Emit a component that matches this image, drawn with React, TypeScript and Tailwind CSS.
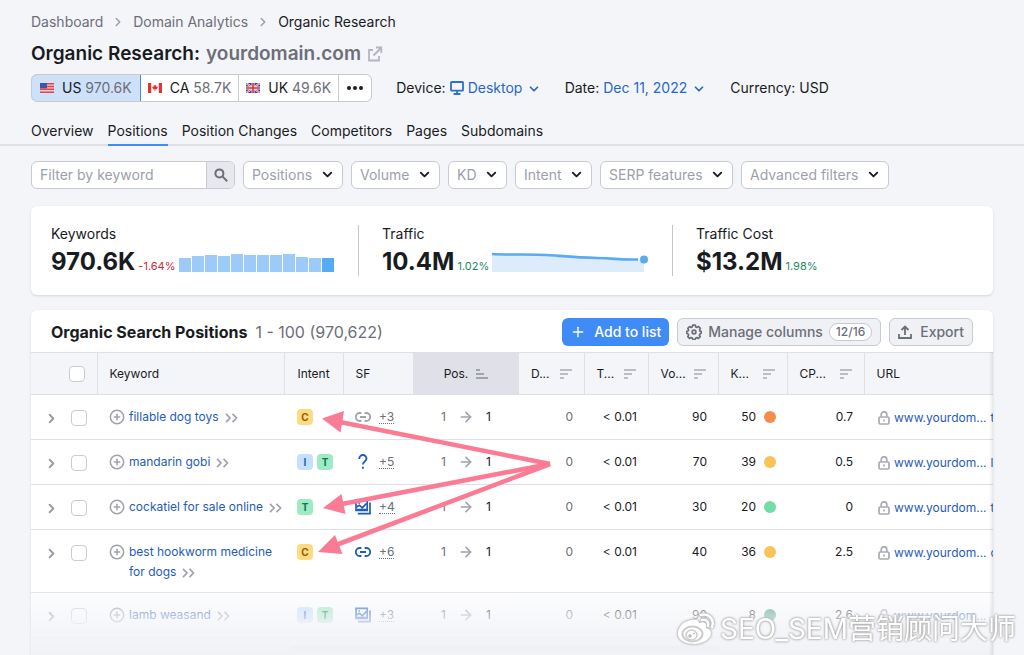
import React from 'react';
import { ChevronDown, ChevronRight, ArrowRight, CirclePlus, Plus } from 'lucide-react';

interface KeywordRow {
  keyword: string;
  intents: ('C' | 'I' | 'T')[];
  feature: 'link' | 'question' | 'image';
  muted?: boolean;
  more: string;
  traffic: string;
  volume: string;
  kd: string;
  kdColor: string;
  cpc: string;
  rest: string;
}

const rows: KeywordRow[] = [
  { keyword: 'fillable dog toys', intents: ['C'], feature: 'link', muted: true, more: '+3', traffic: '< 0.01', volume: '90', kd: '50', kdColor: 'bg-[#f68c4c]', cpc: '0.7', rest: 't' },
  { keyword: 'mandarin gobi', intents: ['I', 'T'], feature: 'question', more: '+5', traffic: '< 0.01', volume: '70', kd: '39', kdColor: 'bg-[#f9c357]', cpc: '0.5', rest: 'l' },
  { keyword: 'cockatiel for sale online', intents: ['T'], feature: 'image', more: '+4', traffic: '< 0.01', volume: '30', kd: '20', kdColor: 'bg-[#74dca6]', cpc: '0', rest: 't' },
  { keyword: 'best hookworm medicine for dogs', intents: ['C'], feature: 'link', more: '+6', traffic: '< 0.01', volume: '40', kd: '36', kdColor: 'bg-[#f9c357]', cpc: '2.5', rest: 'c' },
  { keyword: 'lamb weasand', intents: ['I', 'T'], feature: 'image', more: '+3', traffic: '< 0.01', volume: '90', kd: '8', kdColor: 'bg-[#3f9c7a]', cpc: '2.6', rest: '' },
];

const intentStyles = {
  C: 'bg-[#fbdc80] text-[#a0560c]',
  I: 'bg-[#c4e0fd] text-[#1f62b5]',
  T: 'bg-[#9eeac4] text-[#0d7550]',
};

const bars = [14, 16, 17, 16, 18, 17, 17, 17, 18, 15, 14, 14];

const sortable = [
  { label: 'D...', name: 'Difference' },
  { label: 'T...', name: 'Traffic' },
  { label: 'Vo...', name: 'Volume' },
  { label: 'K...', name: 'KD' },
  { label: 'CP...', name: 'CPC' },
];

const UsFlag = () => (
  <svg width="14" height="10" viewBox="0 0 14 10" aria-hidden="true">
    <rect width="14" height="10" fill="#f6c9cb" />
    <path d="M0 .7h14M0 3.5h14M0 6.3h14M0 9.2h14" stroke="#e0474c" strokeWidth="1.6" />
    <rect width="7" height="5.4" fill="#4254a5" />
  </svg>
);

const CaFlag = () => (
  <svg width="14" height="10" viewBox="0 0 14 10" aria-hidden="true">
    <rect width="14" height="10" fill="#fff" />
    <path d="M0 0h3.2v10H0zM10.8 0H14v10h-3.2z" fill="#e3342f" />
    <path d="M7 1.4l.8 1.4.9-.3-.2 1.6 1.4-.3-.4 1.3-1.3 1.3H7.3v1.8h-.6V6.4H5.8L4.5 5.1l-.4-1.3 1.4.3-.2-1.6.9.3z" fill="#e3342f" />
  </svg>
);

const UkFlag = () => (
  <svg width="14" height="10" viewBox="0 0 14 10" aria-hidden="true">
    <rect width="14" height="10" fill="#3b3f97" />
    <path d="M0 0l14 10M14 0L0 10" stroke="#e9e4f0" strokeWidth="2" />
    <path d="M0 0l14 10M14 0L0 10" stroke="#d8414a" strokeWidth=".7" />
    <path d="M7 0v10M0 5h14" stroke="#f3eef4" strokeWidth="3" />
    <path d="M7 0v10M0 5h14" stroke="#d8323b" strokeWidth="1.6" />
  </svg>
);

const SortIcon = ({ asc = false }: { asc?: boolean }) => (
  <svg width="12" height="10" viewBox="0 0 12 10" fill="none" stroke={asc ? '#8b8e9a' : '#a9abb6'} strokeWidth="1.6" aria-hidden="true">
    <path d={asc ? 'M0 1h4M0 5h8M0 9h12' : 'M0 1h12M0 5h8M0 9h4'} />
  </svg>
);

const DoubleChevron = () => (
  <svg width="13" height="10" viewBox="0 0 13 10" fill="none" stroke="#a0a2ac" strokeWidth="1.7" className="ml-1.5 inline" aria-hidden="true">
    <path d="M1 .8L5 5L1 9.200M7.500 .8L11.500 5L7.500 9.200" />
  </svg>
);

const LinkIcon = () => (
  <svg width="16" height="16" viewBox="0 0 16 16" fill="none" stroke="currentColor" strokeWidth="1.8" aria-hidden="true">
    <path d="M6.4 4H4.8a4 4 0 0 0 0 8h1.600M9.600 4h1.600a4 4 0 0 1 0 8H9.600M5 8h6" />
  </svg>
);

const QuestionIcon = () => (
  <svg width="16" height="16" viewBox="0 0 16 16" fill="none" stroke="currentColor" strokeWidth="1.9" aria-hidden="true">
    <path d="M4.3 5V4.6a3.6 3.6 0 0 1 7.2 0c0 2.6-3.6 3-3.6 6" />
    <path d="M7.9 12.7v2.1" />
  </svg>
);

const ImageIcon = () => (
  <svg width="16" height="16" viewBox="0 0 16 16" fill="none" stroke="currentColor" strokeWidth="1.7" aria-hidden="true">
    <path d="M1 1.400h11.200v10H1z" />
    <path d="M1.4 8L4.500 6.200L7.200 8.800L11.600 4.400M3.400 4h1.600M2 10.600h9.600" />
    <path d="M2.800 14.600H15V3.400" />
  </svg>
);

const LockIcon = () => (
  <svg width="12" height="14" viewBox="0 0 12 14" fill="none" stroke="#a9abb6" strokeWidth="1.7" className="shrink-0" aria-hidden="true">
    <rect x="1" y="6" width="10" height="7" rx="1.2" />
    <path d="M3.2 6V3.6a2.8 2.8 0 0 1 5.6 0V6M6 8.6v1.8" />
  </svg>
);

const GearIcon = () => (
  <svg width="16" height="16" viewBox="0 0 16 16" fill="none" stroke="currentColor" strokeWidth="1.7" strokeLinejoin="round" aria-hidden="true">
    <path d="M6.7 1.2h2.6l.5 1.7 1.2.5 1.6-.9 1.8 1.9-.9 1.5.5 1.2 1.2.3v1.9l-1.3.6-.5 1.2.8 1.5-1.8 1.8-1.5-.8-1.2.5-.6 1.4H6.9l-.6-1.4-1.2-.5-1.6.8-1.7-1.8.8-1.5-.5-1.2-1.3-.6V7.4l1.3-.4.5-1.2-.8-1.5 1.8-1.8 1.5.9 1.2-.5z" />
    <circle cx="8" cy="8" r="1.9" />
  </svg>
);

const FeatureIcon = ({ type }: { type: KeywordRow['feature'] }) => {
  if (type === 'link') return <LinkIcon />;
  if (type === 'question') return <QuestionIcon />;
  return <ImageIcon />;
};

const CheckBox = ({ label }: { label: string }) => (
  <input
    type="checkbox"
    aria-label={label}
    className="block h-4 w-4 appearance-none rounded border border-[#c9ccd4] bg-white checked:bg-[#408cf6]"
  />
);

const FilterSelect = ({ label }: { label: string }) => (
  <div className="relative">
    <select aria-label={label} className="h-7 appearance-none rounded-md border border-[#c8cad2] bg-white pr-[29px] pl-2 text-[#9c9fa9]">
      <option>{label}</option>
    </select>
    <ChevronDown size={15} strokeWidth={3} className="pointer-events-none absolute top-1.5 right-2 text-[#191b23]" />
  </div>
);

const Header: React.FC = () => (
  <header className="border-b-2 border-[#dfe0e5] px-[31px] pt-3">
    <nav aria-label="Breadcrumb" className="flex h-5 items-center gap-2 text-[#6c6e79]">
      <a href="#dashboard">Dashboard</a>
      <ChevronRight size={14} strokeWidth={2.5} className="text-[#9a9ca6]" />
      <a href="#analytics">Domain Analytics</a>
      <ChevronRight size={14} strokeWidth={2.5} className="text-[#9a9ca6]" />
      <a href="#research" className="text-[#191b23]">Organic Research</a>
    </nav>

    <h1 className="mt-2 flex h-7 items-center gap-1.5 text-[19px] font-semibold">
      <span>Organic Research:</span>
      <a href="#domain" className="flex items-center gap-1.5 text-[#6c6e79]">
        yourdomain.com
        <svg width="16" height="16" viewBox="0 0 16 16" fill="none" stroke="#b4b6bf" strokeWidth="1.8" aria-hidden="true">
          <path d="M6 4H2v10.5h10V10M9 1.5h5.3V7M14 2L6.5 9.5" />
        </svg>
      </a>
    </h1>

    <div className="mt-1.5 flex h-7 items-center gap-6">
      <div className="flex h-7 overflow-hidden rounded-md border border-[#c8cad2] bg-white">
        <button className="-my-px -ml-px flex items-center gap-2 rounded-l-md border border-[#4a8fec] bg-[#cde1fb] px-2">
          <UsFlag />
          <span>US <span className="text-[#6c6e79]">970.6K</span></span>
        </button>
        <button className="flex items-center gap-2 border-r border-[#c8cad2] px-[7px]">
          <CaFlag />
          <span>CA <span className="text-[#6c6e79]">58.7K</span></span>
        </button>
        <button className="flex items-center gap-2 border-r border-[#c8cad2] px-[7px]">
          <UkFlag />
          <span>UK <span className="text-[#6c6e79]">49.6K</span></span>
        </button>
        <button aria-label="More countries" className="px-2">
          <svg width="16" height="4" viewBox="0 0 16 4" fill="#191b23" aria-hidden="true">
            <circle cx="2" cy="2" r="2" />
            <circle cx="8" cy="2" r="2" />
            <circle cx="14" cy="2" r="2" />
          </svg>
        </button>
      </div>

      <div className="flex items-center">
        <label htmlFor="device">Device:</label>
        <svg width="14" height="14" viewBox="0 0 14 14" fill="none" stroke="#2f6fd0" strokeWidth="1.8" className="mr-1 ml-1" aria-hidden="true">
          <rect x="1" y="1" width="12" height="8.6" rx=".6" />
          <path d="M7 9.6v3M3.6 13h6.8" />
        </svg>
        <div className="relative">
          <select id="device" className="appearance-none bg-transparent pr-[18px] text-[#2a67c8]">
            <option>Desktop</option>
          </select>
          <ChevronDown size={14} strokeWidth={3} className="pointer-events-none absolute top-1 right-0 text-[#2a67c8]" />
        </div>
      </div>

      <div className="flex items-center gap-1">
        <label htmlFor="date">Date:</label>
        <div className="relative">
          <select id="date" className="appearance-none bg-transparent pr-[18px] text-[#2a67c8]">
            <option>Dec 11, 2022</option>
          </select>
          <ChevronDown size={14} strokeWidth={3} className="pointer-events-none absolute top-1 right-0 text-[#2a67c8]" />
        </div>
      </div>

      <div>Currency: USD</div>
    </div>

    <nav aria-label="Reports" className="-mb-0.5 flex gap-3.5 pt-[19px]">
      <a href="#overview" className="h-[25px]">Overview</a>
      <a href="#positions" className="h-[25px] border-b-2 border-[#408cf6]">Positions</a>
      <a href="#changes" className="h-[25px]">Position Changes</a>
      <a href="#competitors" className="h-[25px]">Competitors</a>
      <a href="#pages" className="h-[25px]">Pages</a>
      <a href="#subdomains" className="h-[25px]">Subdomains</a>
    </nav>
  </header>
);

const Filters: React.FC = () => (
  <div className="mt-[15px] flex gap-2">
    <form className="flex h-7 overflow-hidden rounded-md border border-[#c8cad2] bg-white">
      <input aria-label="Filter by keyword" placeholder="Filter by keyword" className="w-[174px] px-2 outline-none placeholder:text-[#9c9fa9]" />
      <button type="button" aria-label="Search" className="flex w-7 items-center justify-center border-l border-[#c8cad2] bg-[#e7e8ed]">
        <svg width="14" height="14" viewBox="0 0 14 14" fill="none" stroke="#6c6e79" strokeWidth="2" aria-hidden="true">
          <circle cx="5.4" cy="5.4" r="4" />
          <path d="M8.4 8.4l4.8 4.8" />
        </svg>
      </button>
    </form>
    <FilterSelect label="Positions" />
    <FilterSelect label="Volume" />
    <FilterSelect label="KD" />
    <FilterSelect label="Intent" />
    <FilterSelect label="SERP features" />
    <FilterSelect label="Advanced filters" />
  </div>
);

const Summary: React.FC = () => (
  <section className="mt-[17px] grid grid-cols-[327fr_314fr_321fr] rounded-md bg-white py-[19px] shadow-sm">
    <div className="h-[51px] pl-5">
      <h2 className="leading-[18px]">Keywords</h2>
      <div className="mt-[3px] flex items-baseline gap-[3px]">
        <span className="text-2xl font-bold">970.6K</span>
        <span className="text-[11px] text-[#c52a43]">-1.64%</span>
        <svg width="157" height="20" viewBox="0 0 157 20" className="translate-y-0.5" aria-hidden="true">
          {bars.map((h, i) => (
            <rect key={i} x={i * 13} y={20 - h} width="12" height={h} fill={i === bars.length - 1 ? '#57abf5' : '#9dcbf9'} />
          ))}
        </svg>
      </div>
    </div>
    <div className="h-[51px] border-l border-[#c4c7cf] pl-[23px]">
      <h2 className="leading-[18px]">Traffic</h2>
      <div className="mt-[3px] flex items-baseline gap-[3px]">
        <span className="text-2xl font-bold">10.4M</span>
        <span className="text-[11px] text-[#1f8a5f]">1.02%</span>
        <svg width="158" height="20" viewBox="0 0 158 20" className="translate-y-0.5" aria-hidden="true">
          <path d="M0 2C20 3 40 2 55 3S85 5.500 105 6S125 8 145 7.500L152 7.500V20H0z" fill="#ddecfb" />
          <path d="M0 2C20 3 40 2 55 3S85 5.500 105 6S125 8 146 7.500" fill="none" stroke="#5aabf0" strokeWidth="2.600" />
          <circle cx="152" cy="7.500" r="4" fill="#5aabf0" />
        </svg>
      </div>
    </div>
    <div className="h-[51px] border-l border-[#c4c7cf] pl-[23px]">
      <h2 className="leading-[18px]">Traffic Cost</h2>
      <div className="mt-[3px] flex items-baseline gap-[3px]">
        <span className="text-2xl font-bold">$13.2M</span>
        <span className="text-[11px] text-[#1f8a5f]">1.98%</span>
      </div>
    </div>
  </section>
);

const PositionsTable: React.FC = () => (
  <table className="w-full table-fixed border-collapse text-xs leading-5">
    <colgroup>
      <col className="w-[66px]" />
      <col className="w-[187px]" />
      <col className="w-[59px]" />
      <col className="w-[70px]" />
      <col className="w-[106px]" />
      <col className="w-[65px]" />
      <col className="w-[64px]" />
      <col className="w-[70px]" />
      <col className="w-[69px]" />
      <col className="w-[77px]" />
      <col />
    </colgroup>
    <thead>
      <tr className="h-[42px] border-y border-[#dfe0e5] bg-[#f4f5f9] text-left">
        <th className="border-r border-[#dfe0e5] pl-[38px]"><CheckBox label="Select all" /></th>
        <th className="border-r border-[#dfe0e5] pl-3 font-normal">Keyword</th>
        <th className="border-r border-[#dfe0e5] pl-[13px] font-normal">Intent</th>
        <th className="pl-3 font-normal">SF</th>
        <th className="bg-[#dfe0e8] font-normal">
          <button className="flex w-full items-center justify-center gap-2">Pos. <SortIcon asc /></button>
        </th>
        {sortable.map((col) => (
          <th key={col.name} className="border-r border-[#dfe0e5] font-normal">
            <button title={col.name} className="flex w-full items-center justify-between px-3">
              {col.label} <SortIcon />
            </button>
          </th>
        ))}
        <th className="pl-3 font-normal">URL</th>
      </tr>
    </thead>
    <tbody>
      {rows.map((row) => (
        <tr key={row.keyword} className="h-[45px] border-b border-[#dfe0e5] align-top">
          <td className="pt-[15px]">
            <div className="flex items-center gap-3 pl-[13px]">
              <button aria-label={`Expand ${row.keyword}`}><ChevronRight size={15} strokeWidth={3} className="text-[#9a9ca6]" /></button>
              <CheckBox label={`Select ${row.keyword}`} />
            </div>
          </td>
          <td className="pt-3 pb-2.5 pl-3">
            <div className="flex gap-1">
              <button aria-label="Add keyword" className="h-5 shrink-0"><CirclePlus size={16} strokeWidth={2.3} className="text-[#a0a2ac]" /></button>
              <div>
                <a href="#keyword" className="text-[#1f5cb8]">{row.keyword}</a>
                <DoubleChevron />
              </div>
            </div>
          </td>
          <td className="pt-3.5 pl-[13px]">
            <div className="flex gap-1">
              {row.intents.map((intent) => (
                <span key={intent} className={`flex h-4 w-4 items-center justify-center rounded text-[10px] font-bold ${intentStyles[intent]}`}>
                  {intent}
                </span>
              ))}
            </div>
          </td>
          <td className="pt-3 pl-3">
            <div className={`flex h-5 items-center gap-2 ${row.muted ? 'text-[#a0a2ac]' : 'text-[#1f5cb8]'}`}>
              <FeatureIcon type={row.feature} />
              <span className="border-b border-dotted border-[#6c6e79] leading-3 text-[#6c6e79]">{row.more}</span>
            </div>
          </td>
          <td className="pt-3">
            <div className="flex h-5 items-center justify-center gap-3">
              <span className="text-[#6c6e79]">1</span>
              <ArrowRight size={16} strokeWidth={2.3} className="text-[#a0a2ac]" />
              <span>1</span>
            </div>
          </td>
          <td className="pt-3 pr-[11px] text-right text-[#6c6e79]">0</td>
          <td className="pt-3 pr-[11px] text-right">{row.traffic}</td>
          <td className="pt-3 pr-[11px] text-right">{row.volume}</td>
          <td className="pt-3 pr-[11px]">
            <div className="flex h-5 items-center justify-end gap-2">
              {row.kd}
              <span className={`h-3 w-3 rounded-full ${row.kdColor}`} />
            </div>
          </td>
          <td className="pt-3 pr-[11px] text-right">{row.cpc}</td>
          <td className="overflow-hidden pt-[13px] pl-3.5">
            <div className="flex h-5 items-center gap-1 whitespace-nowrap text-[#1f5cb8]">
              <LockIcon />
              <a href="#url">www.yourdom...</a>
              <span>{row.rest}</span>
            </div>
          </td>
        </tr>
      ))}
    </tbody>
  </table>
);

const Arrows: React.FC = () => (
  <svg width="240" height="150" viewBox="315 405 240 150" className="pointer-events-none absolute top-[95px] left-[284px]" aria-hidden="true">
    <g stroke="#fb7b94" strokeWidth="4.600" strokeLinecap="butt">
      <path d="M550 464L340 422" />
      <path d="M550 464L342 504" />
      <path d="M550 464L336 545" />
    </g>
    <g fill="#fb7b94">
      <path d="M322 418.500L344 411L340.500 432.500z" />
      <path d="M323 508L341.500 494L345.500 514z" />
      <path d="M318 552L335 535L342.500 554z" />
    </g>
  </svg>
);

const Watermark: React.FC = () => (
  <div className="pointer-events-none absolute right-2 bottom-2 flex items-center gap-1 text-[28px] leading-9 text-white [filter:drop-shadow(0_0_1px_#999)_drop-shadow(0_0_1px_#ccc)]">
    <svg width="40" height="34" viewBox="0 0 40 34" fill="none" aria-hidden="true">
      <path d="M15 8C7 9 1 16 2 23c1 6 8 9 16 9 9 0 17-5 17-11 0-3-2-4-5-5 1-4 0-7-7-5 0-3-3-4-8-3z" fill="#fff" />
      <ellipse cx="16.500" cy="22" rx="10" ry="7.500" stroke="#ccc" strokeWidth="2" />
      <ellipse cx="15.500" cy="23" rx="5.500" ry="5" stroke="#ccc" strokeWidth="1.500" />
      <circle cx="14" cy="24" r="1.800" fill="#bbb" />
      <circle cx="18" cy="21.500" r="1" fill="#bbb" />
      <path d="M25 3c7-2 14 4 11 12M26 8c4-1 7 2 6 6" stroke="#fff" strokeWidth="2.500" strokeLinecap="round" />
    </svg>
    <span>SEO_SEM营销顾问大师</span>
  </div>
);

const App: React.FC = () => {
  return (
    <div className="relative min-h-screen overflow-hidden bg-[#f4f5f9] font-[Inter,'Noto_Sans_CJK_SC',sans-serif] text-sm text-[#191b23]">
      <Header />
      <main className="px-[31px]">
        <Filters />
        <Summary />

        <section className="relative mt-[15px] overflow-hidden rounded-t-md bg-white shadow-sm">
          <div className="flex items-center gap-2 px-5 pt-2 pb-1.5">
            <h2 className="text-base leading-7 font-bold">Organic Search Positions</h2>
            <span className="text-base leading-7 text-[#6c6e79]">1 - 100 (970,622)</span>
            <div className="ml-auto flex gap-2 font-medium">
              <button className="flex h-7 items-center gap-2 rounded-md bg-[#408cf6] px-2 text-white">
                <Plus size={16} />
                Add to list
              </button>
              <button className="flex h-7 items-center gap-1.5 rounded-md border border-[#c8cad2] bg-[#f0f1f4] px-2 text-[#6c6e79]">
                <GearIcon />
                Manage columns
                <span className="rounded-full border border-[#c8cad2] bg-white px-1.5 text-xs leading-4">12/16</span>
              </button>
              <button className="flex h-7 items-center gap-2 rounded-md border border-[#c8cad2] bg-[#f0f1f4] px-2 text-[#6c6e79]">
                <svg width="14" height="14" viewBox="0 0 14 14" fill="none" stroke="currentColor" strokeWidth="1.8" aria-hidden="true">
                  <path d="M1 9v4h12V9M7 10V1.500M3.500 5L7 1.500L10.500 5" />
                </svg>
                Export
              </button>
            </div>
          </div>
          <PositionsTable />
          <div className="h-[17px] pt-2 pl-[259px]">
            <div className="h-1.5 w-[430px] rounded-full bg-[#c4c7cf]" />
          </div>
          <Arrows />
          <div className="pointer-events-none absolute inset-x-0 bottom-0 h-[63px] bg-linear-to-b from-[#f4f5f9]/20 via-[#f4f5f9]/80 to-[#f1f2f6]" />
          <div className="pointer-events-none absolute top-[42px] right-0 bottom-0 w-1 bg-linear-to-r from-transparent to-[#191b23]/10" />
        </section>
      </main>
      <Watermark />
    </div>
  );
};

export default App;
